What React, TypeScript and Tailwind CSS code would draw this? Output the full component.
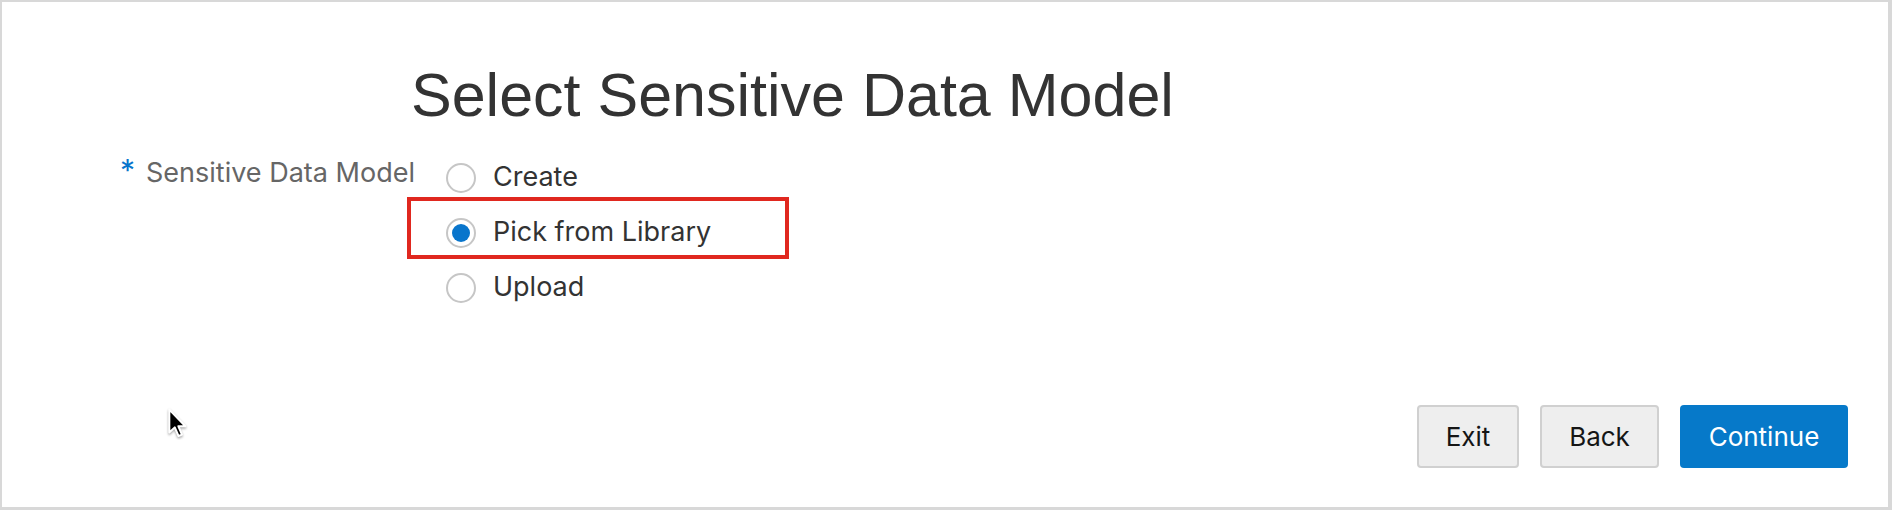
import React from "react";

const body = { fontFamily: "Inter, 'Noto Sans', 'Liberation Sans', sans-serif" };
const title = { fontFamily: "'Liberation Sans', Arial, sans-serif" };

function Radio({ checked }: { checked?: boolean }) {
  return (
    <span className="flex h-[30px] w-[30px] shrink-0 items-center justify-center rounded-full border-2 border-[#c6c6c6] bg-white">
      {checked && <span className="h-[18px] w-[18px] rounded-full bg-[#0875cc]" />}
    </span>
  );
}

function Option({ label, checked, boxed }: { label: string; checked?: boolean; boxed?: boolean }) {
  return (
    <div className="relative flex h-[55px] items-center gap-[17px]">
      {boxed && (
        <span className="pointer-events-none absolute left-[-39px] top-[-8px] h-[62px] w-[382px] border-4 border-[#e0281f]" />
      )}
      <Radio checked={checked} />
      <span className="text-[27px] text-[#333333]" style={body}>
        {label}
      </span>
    </div>
  );
}

export default function App() {
  return (
    <div className="relative flex h-[510px] w-full flex-col border-b-[3px] border-l-2 border-r-4 border-t-2 border-[#d8d8d8] bg-white">
      <h1
        className="ml-[409px] mt-[62px] text-[61px] font-normal leading-[62px] text-[#333333]"
        style={title}
      >
        Select Sensitive Data Model
      </h1>

      <div className="mt-[21px] flex items-start">
        <div className="flex h-[55px] w-[444px] items-center pl-[118px]" style={body}>
          <span className="mr-[11px] self-start pt-[8px] text-[30px] leading-[30px] text-[#0875cc]">*</span>
          <span className="-mt-[2px] text-[27px] text-[#666666]">Sensitive Data Model</span>
        </div>
        <div className="mt-[3px] flex flex-col">
          <Option label="Create" />
          <Option label="Pick from Library" checked boxed />
          <Option label="Upload" />
        </div>
      </div>

      <div className="mt-auto flex justify-end gap-[21px] pb-[39px] pr-[40px]" style={body}>
        <button className="h-[63px] w-[102px] rounded-[4px] border-2 border-[#d0d0d0] bg-[#eeeeee] text-[26px] text-[#151515]">
          Exit
        </button>
        <button className="h-[63px] w-[119px] rounded-[4px] border-2 border-[#d0d0d0] bg-[#eeeeee] text-[26px] text-[#151515]">
          Back
        </button>
        <button className="h-[63px] w-[168px] rounded-[4px] bg-[#0679c9] text-[26px] text-white">
          Continue
        </button>
      </div>

      <svg
        className="absolute left-[163px] top-[403px]"
        width="23"
        height="35"
        viewBox="-2 -2 16 24"
      >
        <path
          d="M1 1 L1 17 L4.8 13.4 L7.4 19.4 L9.8 18.4 L7.3 12.6 L12.2 12.6 Z"
          fill="#000"
          stroke="#fff"
          strokeWidth="1.4"
          strokeLinejoin="round"
          style={{ filter: "drop-shadow(0.5px 1px 0.8px rgba(0,0,0,0.35))" }}
        />
      </svg>
    </div>
  );
}
